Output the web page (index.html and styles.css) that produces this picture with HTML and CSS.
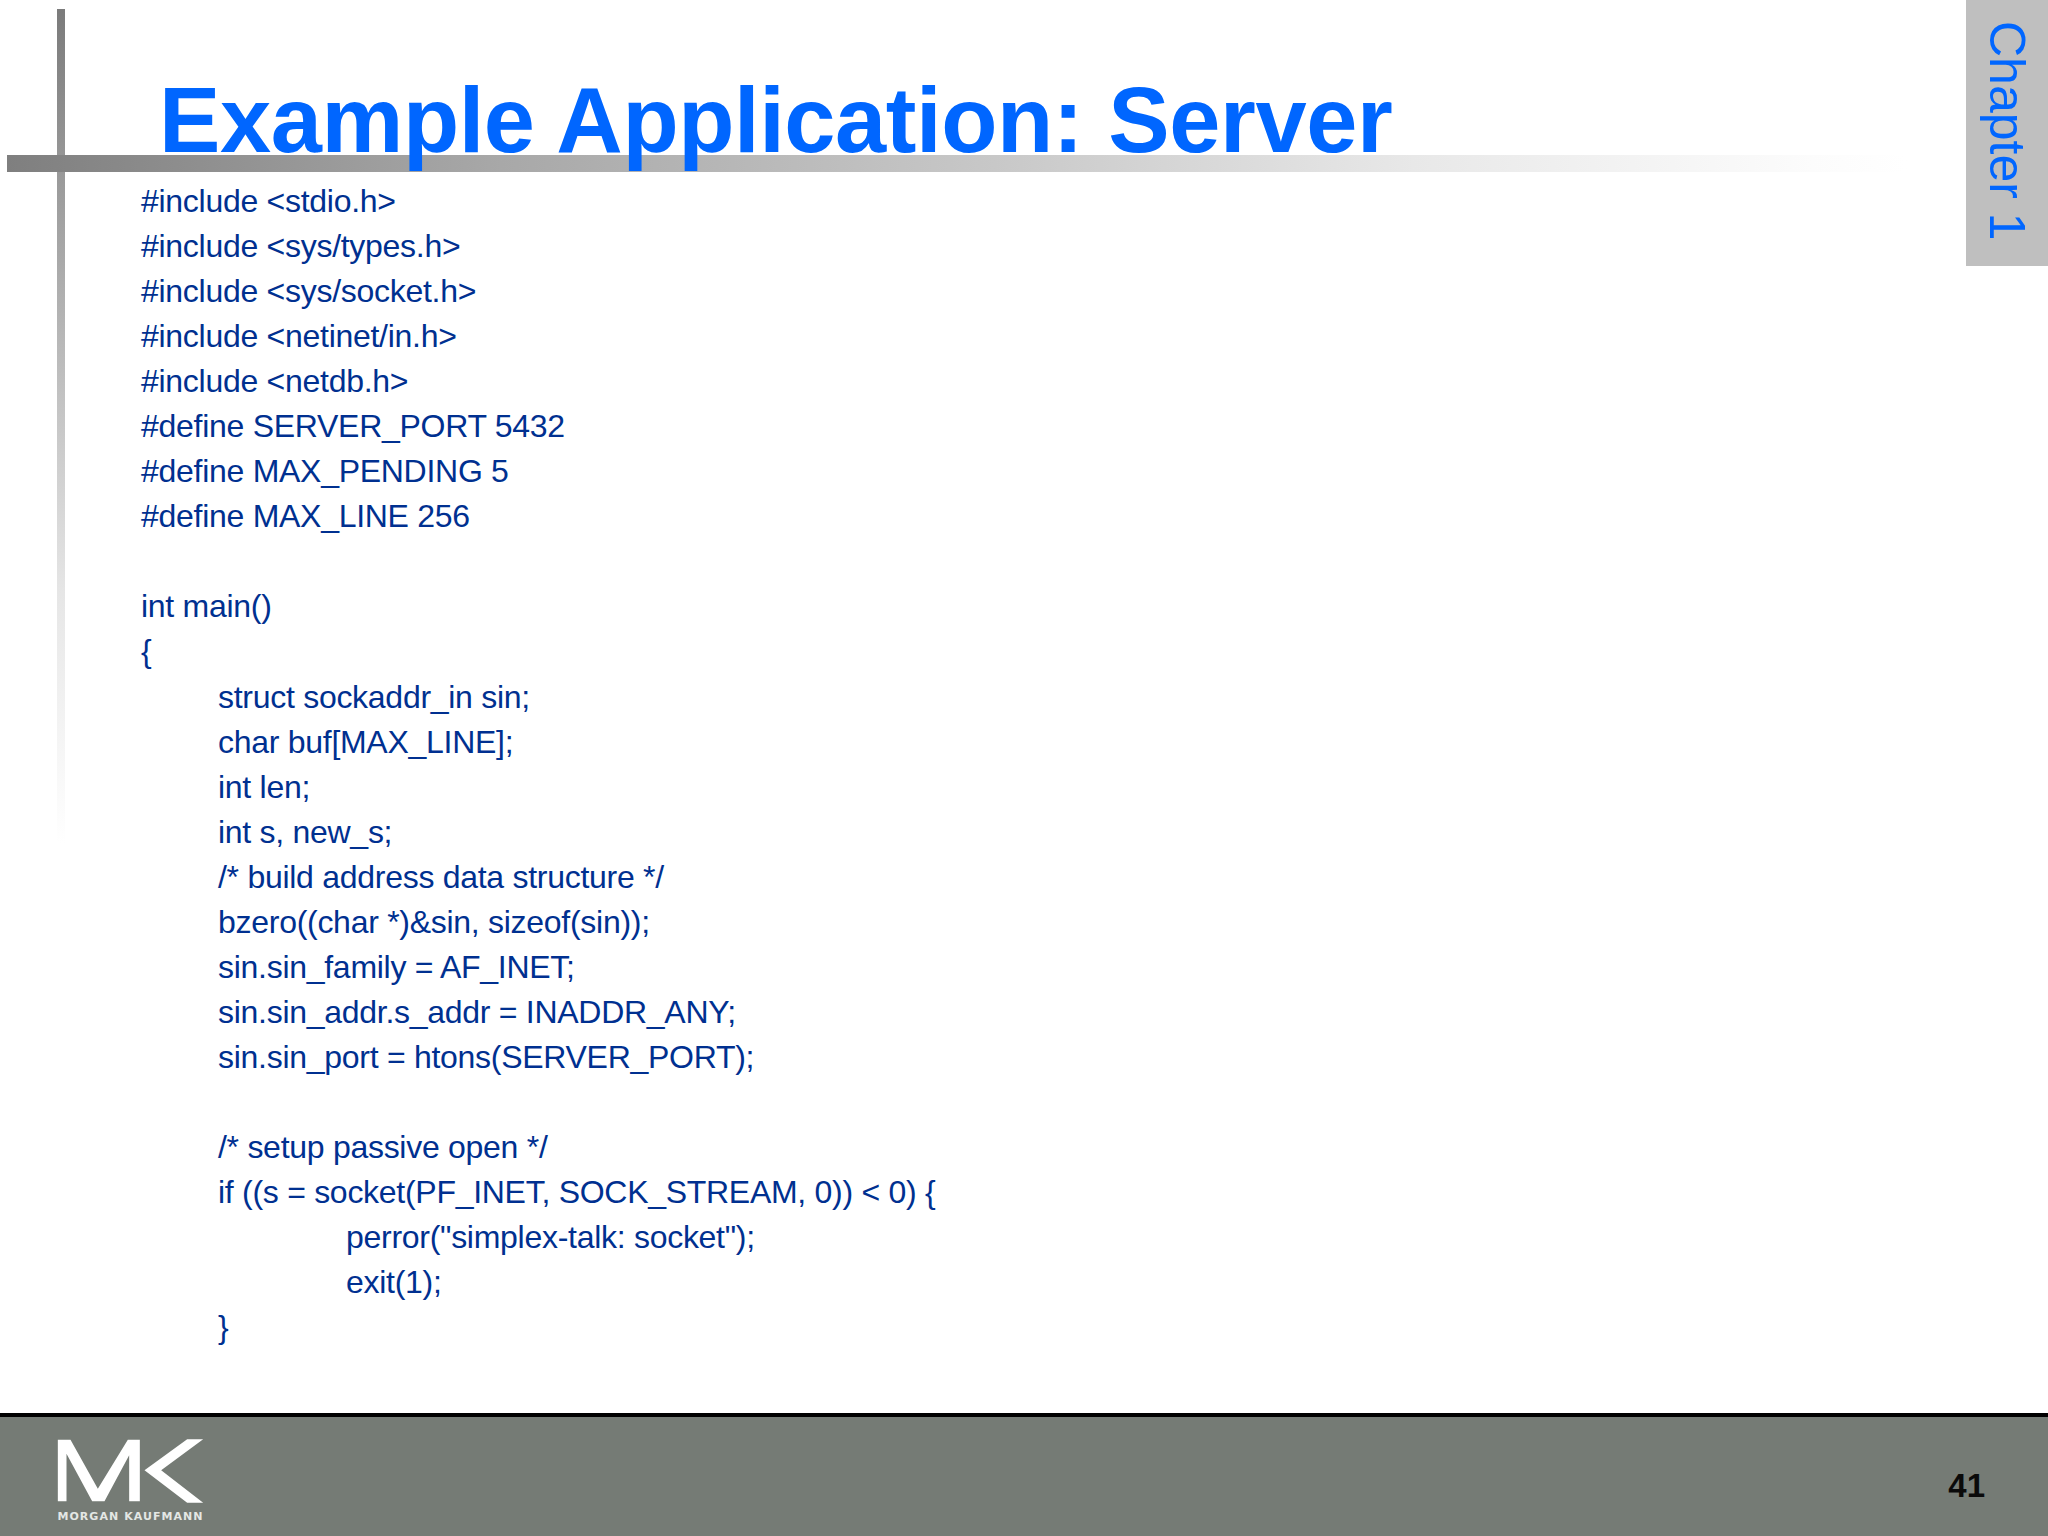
FILE: index.html
```html
<!DOCTYPE html>
<html>
    <head>
        <meta charset="utf-8">
        <title>Example Application: Server</title>
        <link rel="stylesheet" href="styles.css">
    </head>
    <body>
        <div class="slide">
            <div class="rule-v"></div>
            <div class="rule-h"></div>
            <div class="chapter-tab"><span>Chapter 1</span></div>

            <div class="content">
                <h1 class="title">Example Application: Server</h1>
                <div class="code">
                    <div class="line">#include &lt;stdio.h&gt;</div>
                    <div class="line">#include &lt;sys/types.h&gt;</div>
                    <div class="line">#include &lt;sys/socket.h&gt;</div>
                    <div class="line">#include &lt;netinet/in.h&gt;</div>
                    <div class="line">#include &lt;netdb.h&gt;</div>
                    <div class="line">#define SERVER_PORT 5432</div>
                    <div class="line">#define MAX_PENDING 5</div>
                    <div class="line">#define MAX_LINE 256</div>
                    <div class="line blank"></div>
                    <div class="line">int main()</div>
                    <div class="line">{</div>
                    <div class="line in1">struct sockaddr_in sin;</div>
                    <div class="line in1">char buf[MAX_LINE];</div>
                    <div class="line in1">int len;</div>
                    <div class="line in1">int s, new_s;</div>
                    <div class="line in1">/* build address data structure */</div>
                    <div class="line in1">bzero((char *)&amp;sin, sizeof(sin));</div>
                    <div class="line in1">sin.sin_family = AF_INET;</div>
                    <div class="line in1">sin.sin_addr.s_addr = INADDR_ANY;</div>
                    <div class="line in1">sin.sin_port = htons(SERVER_PORT);</div>
                    <div class="line blank"></div>
                    <div class="line in1">/* setup passive open */</div>
                    <div class="line in1">if ((s = socket(PF_INET, SOCK_STREAM, 0)) &lt; 0) {</div>
                    <div class="line in2">perror("simplex-talk: socket");</div>
                    <div class="line in2">exit(1);</div>
                    <div class="line in1">}</div>
                </div>
            </div>

            <div class="footer">
                <div class="logo">
                    <svg class="logo-mark" viewBox="170 146 440 192">
                        <polygon points="172,148 210,148 292,295 382,148 418,148 418,333 386,333 386,195 312,333 275,333 198,190 198,333 172,333"/>
                        <polygon points="608,147 560,147 432,240 560,337 608,337 482,240"/>
                    </svg>
                    <div class="logo-name">MORGAN KAUFMANN</div>
                </div>
                <div class="page-num">41</div>
            </div>
        </div>
    </body>
</html>
```

FILE: styles.css
```css
html, body {
    margin: 0;
    padding: 0;
}

body {
    background: #fff;
    font-family: "Liberation Sans", Arial, sans-serif;
}

.slide {
    position: relative;
    width: 2048px;
    height: 1536px;
    overflow: hidden;
    display: flex;
    flex-direction: column;
}

/* decoration behind the title */
.rule-v {
    position: absolute;
    left: 57px;
    top: 9px;
    width: 8px;
    height: 835px;
    background: linear-gradient(to bottom, #7b7b7b, #e6e6e6 70%, #fff);
}

.rule-h {
    position: absolute;
    left: 7px;
    top: 155px;
    width: 1900px;
    height: 17px;
    background: linear-gradient(to right, #7f7f7f, #a8a8a8 26%, #c8c8c8 52%, #e8e8e8 74%, #fcfcfc 95%, #fff);
}

.chapter-tab {
    position: absolute;
    right: 0;
    top: 0;
    width: 82px;
    height: 266px;
    background: #bfbfbf;
    display: flex;
    justify-content: center;
    padding-top: 21px;
    box-sizing: border-box;
}

.chapter-tab span {
    writing-mode: vertical-rl;
    font-size: 50px;
    line-height: 82px;
    color: #0066ff;
}

.content {
    position: relative;
    flex: 1;
    padding-left: 141px;
}

.title {
    margin: 0 0 0 18px;
    padding-top: 69px;
    font-size: 92px;
    line-height: 103px;
    font-weight: bold;
    letter-spacing: -0.4px;
    color: #0066ff;
    white-space: nowrap;
}

.code {
    padding-top: 7px;
    font-size: 32px;
    line-height: 45.05px;
    letter-spacing: -0.28px;
    color: #003090;
}

.line {
    white-space: nowrap;
}

.blank {
    height: 45.05px;
}

.in1 {
    padding-left: 77px;
}

.in2 {
    padding-left: 205px;
}

.footer {
    box-sizing: border-box;
    height: 123px;
    border-top: 4px solid #000;
    background: #757b75;
    display: flex;
    justify-content: space-between;
    align-items: center;
    padding: 9px 63px 0 57px;
}

.logo {
    display: flex;
    flex-direction: column;
    align-items: center;
}

.logo-mark {
    display: block;
    width: 147px;
    height: 64px;
    fill: #fff;
}

.logo-name {
    margin-top: 7px;
    font-family: "DejaVu Sans", sans-serif;
    font-size: 11px;
    line-height: 14px;
    font-weight: bold;
    letter-spacing: 1.05px;
    color: #e4e7e4;
    white-space: nowrap;
}

.page-num {
    padding-top: 9px;
    font-size: 33px;
    font-weight: bold;
    color: #0a0a0a;
}
```
